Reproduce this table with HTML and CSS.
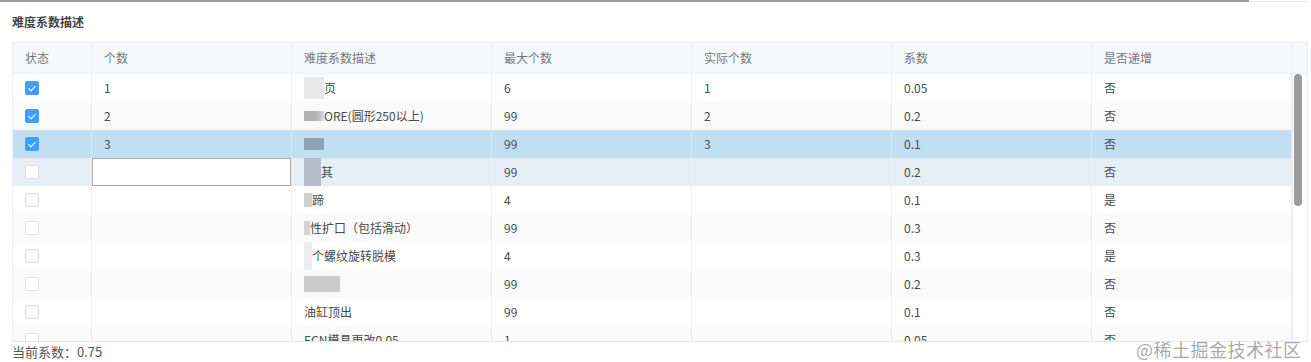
FILE: index.html
```html
<!DOCTYPE html>
<html lang="zh">
<head>
<meta charset="utf-8">
<link rel="stylesheet" href="styles.css">
</head>
<body>
<div class="topbar"><div class="bar"></div><div class="bar-end"></div></div>
<div class="page">
  <h3 class="title">难度系数描述</h3>
  <div class="table">
    <div class="thead">
      <div class="th">状态</div>
      <div class="th">个数</div>
      <div class="th">难度系数描述</div>
      <div class="th">最大个数</div>
      <div class="th">实际个数</div>
      <div class="th">系数</div>
      <div class="th">是否递增</div>
      <div class="th gutter"></div>
    </div>
    <div class="body-wrap">
      <div class="tbody">
        <div class="tr">
          <div class="td"><span class="cb on"></span></div>
          <div class="td">1</div>
          <div class="td"><span class="mask m1"></span>页</div>
          <div class="td">6</div>
          <div class="td">1</div>
          <div class="td">0.05</div>
          <div class="td">否</div>
        </div>
        <div class="tr stripe">
          <div class="td"><span class="cb on"></span></div>
          <div class="td">2</div>
          <div class="td"><span class="mask m2"></span>ORE(圆形250以上)</div>
          <div class="td">99</div>
          <div class="td">2</div>
          <div class="td">0.2</div>
          <div class="td">否</div>
        </div>
        <div class="tr selected">
          <div class="td"><span class="cb on"></span></div>
          <div class="td">3</div>
          <div class="td"><span class="mask m3"></span></div>
          <div class="td">99</div>
          <div class="td">3</div>
          <div class="td">0.1</div>
          <div class="td">否</div>
        </div>
        <div class="tr hover">
          <div class="td"><span class="cb"></span></div>
          <div class="td edit"><input class="cell-input" type="text" value=""></div>
          <div class="td"><span class="mask m4"></span>其</div>
          <div class="td">99</div>
          <div class="td"></div>
          <div class="td">0.2</div>
          <div class="td">否</div>
        </div>
        <div class="tr">
          <div class="td"><span class="cb"></span></div>
          <div class="td"></div>
          <div class="td"><span class="mask m5"></span>蹄</div>
          <div class="td">4</div>
          <div class="td"></div>
          <div class="td">0.1</div>
          <div class="td">是</div>
        </div>
        <div class="tr stripe">
          <div class="td"><span class="cb"></span></div>
          <div class="td"></div>
          <div class="td"><span class="mask m6"></span>性扩口（包括滑动）</div>
          <div class="td">99</div>
          <div class="td"></div>
          <div class="td">0.3</div>
          <div class="td">否</div>
        </div>
        <div class="tr">
          <div class="td"><span class="cb"></span></div>
          <div class="td"></div>
          <div class="td"><span class="mask m7"></span>个螺纹旋转脱模</div>
          <div class="td">4</div>
          <div class="td"></div>
          <div class="td">0.3</div>
          <div class="td">是</div>
        </div>
        <div class="tr stripe">
          <div class="td"><span class="cb"></span></div>
          <div class="td"></div>
          <div class="td"><span class="mask m8"></span></div>
          <div class="td">99</div>
          <div class="td"></div>
          <div class="td">0.2</div>
          <div class="td">否</div>
        </div>
        <div class="tr">
          <div class="td"><span class="cb"></span></div>
          <div class="td"></div>
          <div class="td">油缸顶出</div>
          <div class="td">99</div>
          <div class="td"></div>
          <div class="td">0.1</div>
          <div class="td">否</div>
        </div>
        <div class="tr stripe">
          <div class="td"><span class="cb"></span></div>
          <div class="td"></div>
          <div class="td">ECN模具更改0.05</div>
          <div class="td">1</div>
          <div class="td"></div>
          <div class="td">0.05</div>
          <div class="td">否</div>
        </div>
      </div>
      <div class="scrollbar"><div class="thumb"></div></div>
    </div>
  </div>
  <div class="footer">当前系数：0.75</div>
</div>
<div class="watermark">@稀土掘金技术社区</div>
</body>
</html>
```

FILE: styles.css
```css
* { box-sizing: border-box; }
html, body {
  margin: 0;
  padding: 0;
  background: #fff;
  font-family: "Noto Sans CJK SC", "Noto Sans", sans-serif;
  font-size: 12px;
  color: #4a4a4a;
}
.topbar {
  display: flex;
  height: 3px;
}
.bar {
  width: 1249px;
  height: 2px;
  background: #9c9c9c;
}
.bar-end {
  width: 59px;
  height: 2px;
  border-bottom: 1px solid #ececec;
  border-right: 1px solid #ececec;
}
.page {
  padding-left: 12px;
}
.title {
  margin: 0;
  height: 39px;
  padding-top: 10px;
  font-size: 12px;
  line-height: 18px;
  font-weight: bold;
  color: #444;
}
.table {
  width: 1296px;
  border: 1px solid #ebeef5;
  border-bottom-color: #e6e6e6;
}
.thead {
  display: grid;
  grid-template-columns: 79px repeat(6, 200px) 16px;
  height: 31px;
  background: #f6f9fc;
  border-bottom: 1px solid #ebeef5;
}
.th {
  border-right: 1px solid #ebeef5;
  padding-left: 12px;
  line-height: 30px;
  color: #777;
}
.th.gutter {
  border-right: none;
}
.body-wrap {
  display: flex;
  height: 267px;
  overflow: hidden;
}
.tbody {
  width: 1279px;
}
.tr {
  display: grid;
  grid-template-columns: 79px repeat(6, 200px);
  height: 28px;
  background: #fff;
}
.tr.stripe { background: #fafafa; }
.tr.selected { background: #c2def3; }
.tr.hover { background: #e5edf5; }
.td {
  border-right: 1px solid #ebeef5;
  padding-left: 12px;
  line-height: 28px;
  white-space: nowrap;
  overflow: hidden;
  display: flex;
  align-items: center;
}
.tr.selected .td { border-right-color: #dceaf6; }
.td.edit {
  padding: 0;
}
.cell-input {
  width: 199px;
  height: 28px;
  margin: 0 0 0 0;
  border: 1px solid #a9a9a9;
  background: #fff;
  font: inherit;
  outline: none;
}
.cb {
  display: inline-block;
  width: 14px;
  height: 14px;
  border: 1px solid #dcdfe6;
  border-radius: 2px;
  background: #fff;
  position: relative;
}
.cb.on {
  background: #409eff;
  border-color: #409eff;
}
.cb.on::after {
  content: "";
  position: absolute;
  left: 4px;
  top: 2px;
  width: 3px;
  height: 6px;
  border: 1px solid #fff;
  border-left: 0;
  border-top: 0;
  transform: rotate(45deg);
}
.mask {
  display: inline-block;
  width: 20px;
  height: 22px;
  flex: none;
}
.m1 { background: #e8e8e8; }
.m2 { height: 10px; background: linear-gradient(90deg, #b1b1b1 60%, #d8d8d8); }
.m3 { height: 12px; background: #8fa1b6; }
.m4 { width: 17px; height: 28px; background: #b7c0ca; }
.m5 { width: 8px; height: 14px; background: #cfcfcf; }
.m6 { width: 6px; height: 14px; background: #d2d2d2; }
.m7 { width: 8px; height: 28px; background: #ececec; }
.m8 { width: 36px; height: 16px; background: #cbcbcb; }
.scrollbar {
  width: 16px;
  border-left: 1px solid #ebeef5;
  padding-left: 1px;
  background: #fff;
}
.thumb {
  width: 8px;
  height: 132px;
  background: #9b9b9b;
  border-radius: 4px;
}
.footer {
  height: 20px;
  line-height: 20px;
  font-size: 13px;
  color: #555;
}
.watermark {
  position: absolute;
  left: 1136px;
  top: 338px;
  font-size: 18px;
  line-height: 22px;
  color: rgba(110, 110, 110, 0.6);
  letter-spacing: 0.5px;
}
```
